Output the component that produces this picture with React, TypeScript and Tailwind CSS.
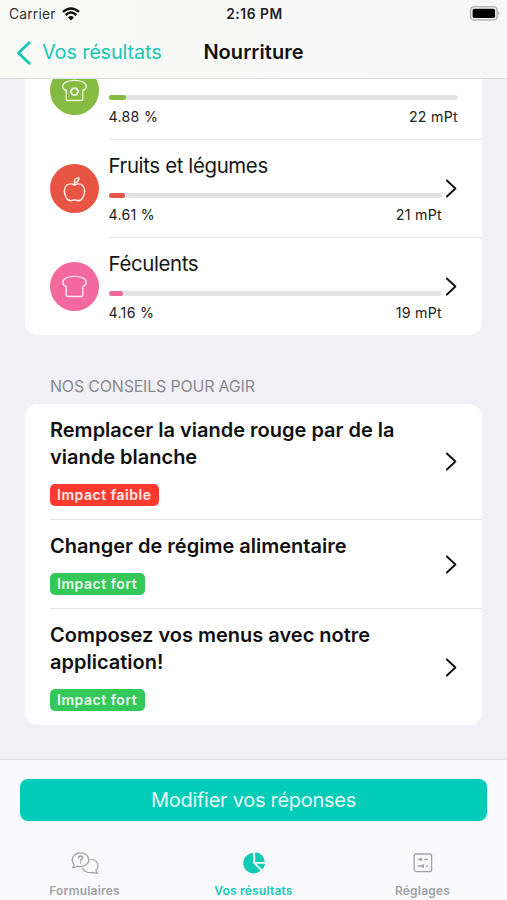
import type { ReactNode } from 'react'

type FoodItem = {
  name: string
  percent: string
  points: string
  barClass: string
  circleClass: string
  width: number
  icon: ReactNode
}

type Advice = { title: string; impact: string; badgeClass: string; rowClass: string }

// ─── Icons ────────────────────────────────────────────────────────────────────

function BreadIcon({ filled = false }: { filled?: boolean }) {
  return (
    <svg width="26" height="23" viewBox="0 0 26 23" fill="none" stroke="white" strokeOpacity="0.85" strokeWidth="1.4" strokeLinejoin="round">
      <path d="M12.5 1.4 C6.1 1.4 .8 3.6 .8 7.2 C.8 9.4 2 10.9 4.2 11.1 V20 Q4.2 21.5 5.7 21.5 H19.3 Q20.8 21.5 20.8 20 V11.1 C23 10.9 24.2 9.4 24.2 7.2 C24.2 3.6 18.9 1.4 12.5 1.4 Z" />
      {filled && <path d="M10.7 9.3 H14.3 L16.4 12.5 L14.3 15.9 H10.7 L8.6 12.5 Z" strokeWidth="1.7" />}
    </svg>
  )
}

function AppleIcon() {
  return (
    <svg width="23" height="26" viewBox="0 0 24 27" fill="none" stroke="white" strokeOpacity="0.9" strokeWidth="1.5" strokeLinejoin="round">
      <path d="M12 9.4 C9.5 8 6 7.9 3.8 9.6 C.6 12.4 1 18 3 21.8 C4.8 25.5 7.4 26.4 10 25.2 Q12 24.5 14 25.2 C16.6 26.4 19.2 25.5 21 21.8 C23 18 23.4 12.4 20.2 9.6 C18 7.9 14.5 8 12 9.4 Z" />
      <path d="M12 9.2 V6.9 C11 4 13.2 1.8 16.5 1.9 C17 4.9 15 6.9 12 6.9" />
    </svg>
  )
}

function Chevron() {
  return (
    <svg className="shrink-0" width="12" height="19" viewBox="0 0 12 19" fill="none" stroke="#111" strokeWidth="1.9" strokeLinecap="round" strokeLinejoin="round">
      <path d="M1.9 1.5 L10.4 9.5 L1.9 17.5" />
    </svg>
  )
}

function ChatIcon() {
  return (
    <svg width="28" height="22" viewBox="0 0 28 22" fill="none" stroke="currentColor" strokeWidth="1.3" strokeLinejoin="round" strokeLinecap="round">
      <path d="M9.5 .9 C4.8 .9 1.2 4 1.2 7.8 C1.2 9.8 2.1 11.6 3.2 12.6 C3.2 14 2.5 14.9 1.7 15.5 C3.4 15.6 5.2 15 6.3 14.2 C12.5 15.7 17.8 12.4 17.8 7.8 C17.8 4 14.4 .9 9.5 .9 Z" />
      <path d="M19.7 7.4 C24.2 7.7 27 10.4 27 13.8 C27 15.6 26.2 17.2 25 18.2 C25.1 19.6 25.7 20.6 26.5 21.2 C24.7 21.2 23.3 20.8 22.1 20.3 C17.4 21.6 12.7 19.6 11.7 16.2" />
      <path d="M7.5 5.9 C7.5 3.4 11.6 3.5 11.6 5.8 C11.6 7.2 9.6 7.2 9.6 8.7 M9.6 10.8 V11" strokeWidth="1.5" />
    </svg>
  )
}

function PieIcon() {
  return (
    <svg width="24" height="22" viewBox="0 0 24 22" fill="currentColor">
      <path d="M11.3 1 V11.2 L18.6 18.5 A10.2 10.2 0 1 1 11.3 1 Z" />
      <path d="M13.1 .2 A10 10 0 0 1 22.8 10 H13.1 Z" />
      <path d="M14.2 11.8 H23.2 A9.5 9.5 0 0 1 20 17.6 Z" />
    </svg>
  )
}

function SettingsIcon() {
  return (
    <svg width="20" height="20" viewBox="0 0 20 20" fill="none" stroke="currentColor" strokeWidth="1.3">
      <rect x="1.2" y="1" width="17.4" height="17.7" rx="2" />
      <path d="M4.8 6.4 H9.5 M11 6.4 H15 M4.8 13 H11 M13.2 13 H15" />
      <path d="M7.7 4.7 V8.1 M10.1 11.3 V14.7" strokeWidth="1.7" />
    </svg>
  )
}

// ─── Data ─────────────────────────────────────────────────────────────────────

const foods: FoodItem[] = [
  { name: 'Fruits et légumes', percent: '4.61 %', points: '21 mPt', barClass: 'bg-[#e85747]', circleClass: 'bg-[#e95544]', width: 16, icon: <AppleIcon /> },
  { name: 'Féculents', percent: '4.16 %', points: '19 mPt', barClass: 'bg-[#f2679c]', circleClass: 'bg-[#f3689d]', width: 14, icon: <BreadIcon /> },
]

const advices: Advice[] = [
  { title: 'Remplacer la viande rouge par de la viande blanche', impact: 'Impact faible', badgeClass: 'w-[109px] bg-[#ff3b30]', rowClass: 'h-[115px]' },
  { title: 'Changer de régime alimentaire', impact: 'Impact fort', badgeClass: 'w-[95px] bg-[#34c759]', rowClass: 'h-[89px]' },
  { title: 'Composez vos menus avec notre application!', impact: 'Impact fort', badgeClass: 'w-[95px] bg-[#34c759]', rowClass: 'h-[117px]' },
]

function Bar({ width, color }: { width: number; color: string }) {
  return (
    <div className="h-[5px] rounded-full bg-[#e3e3e3]">
      <div className={`h-full rounded-full ${color}`} style={{ width }} />
    </div>
  )
}

function Figures({ percent, points }: { percent: string; points: string }) {
  return (
    <div className="mt-2 flex justify-between text-[14.2px] leading-[18px] tracking-[0.28px] text-[#222]">
      <span>{percent}</span>
      <span>{points}</span>
    </div>
  )
}

function FoodRow({ item }: { item: FoodItem }) {
  return (
    <div className="flex h-[98px] pl-[25px]">
      <div className={`mt-[25px] flex size-[49px] shrink-0 items-center justify-center rounded-full ${item.circleClass}`}>
        {item.icon}
      </div>
      <div className="ml-[9.5px] flex flex-1 items-center border-t border-[#e7e7ea] pr-[25px]">
        <div className="flex h-full min-w-0 flex-1 flex-col">
          <div className="mt-[12px] h-[28px] text-[20.4px] leading-[28px] tracking-[-0.35px] text-[#151515]">{item.name}</div>
          <div className="mt-[13px]">
            <Bar width={item.width} color={item.barClass} />
          </div>
          <Figures percent={item.percent} points={item.points} />
        </div>
        <div className="ml-[3px] flex">
          <Chevron />
        </div>
      </div>
    </div>
  )
}

// ─── Screen ───────────────────────────────────────────────────────────────────

export default function App() {
  return (
    <div className="flex h-[900px] w-[507px] flex-col overflow-hidden bg-[#f1f0f5] font-['Inter','Liberation_Sans',sans-serif]">
      <header className="h-[79px] shrink-0 border-b border-[#dededf] bg-linear-to-r from-[#fafbf8] to-[#f7f7f8]">
        <div className="grid h-[27px] grid-cols-3 items-center pr-[7px] pl-[9px] text-[13.8px] text-[#303030]">
          <div className="flex items-center gap-[6px]">
            <span className="pt-px tracking-[0.2px]">Carrier</span>
            <svg width="18" height="14" viewBox="0 0 18 14" fill="none" stroke="#111" strokeWidth="2.4">
              <path d="M.9 4.9 Q9 -2 17.1 4.9 M3.7 8 Q9 3.2 14.3 8" />
              <path d="M6 10.4 Q9 7.8 12 10.4 L9 13.6 Z" fill="#111" stroke="none" />
            </svg>
          </div>
          <span className="pt-px text-center font-semibold tracking-[0.55px] text-[#222]">2:16 PM</span>
          <svg className="justify-self-end" width="31" height="15" viewBox="0 0 31 15" fill="none">
            <rect x="1.6" y=".8" width="26.5" height="13.2" rx="3.5" stroke="#b8b8b8" strokeWidth="1.6" />
            <rect x="3.6" y="2.8" width="22.5" height="9.2" rx="1.8" fill="#000" />
            <path d="M29.3 5 Q31.4 7.3 29.3 9.7 Z" fill="#aaa" />
          </svg>
        </div>
        <div className="relative flex h-[50px] items-center justify-center">
          <button className="absolute top-[12px] left-[16px] flex items-center gap-[10px] text-[20px] leading-[27px] tracking-[-0.2px] text-[#18c8b5]">
            <svg width="16" height="24" viewBox="0 0 16 24" fill="none" stroke="currentColor" strokeWidth="2.8" strokeLinecap="round" strokeLinejoin="round">
              <path d="M13.2 1.8 L2.5 12 L13.2 22.2" />
            </svg>
            Vos résultats
          </button>
          <h1 className="text-[20px] font-semibold tracking-[0.05px] text-[#111]">Nourriture</h1>
        </div>
      </header>

      <main className="h-[680px] shrink-0 overflow-hidden px-[25px]">
        <section className="rounded-b-[13px] bg-white">
          <div className="flex h-[60px] pl-[25px]">
            <div className="-mt-[13px] flex size-[49px] shrink-0 items-center justify-center rounded-full bg-[#86bb42]">
              <BreadIcon filled />
            </div>
            <div className="ml-[9.5px] flex-1 pt-[16px] pr-[24px]">
              <Bar width={17} color="bg-[#86bb42]" />
              <Figures percent="4.88 %" points="22 mPt" />
            </div>
          </div>
          {foods.map((item) => <FoodRow key={item.name} item={item} />)}
        </section>

        <h2 className="mt-[41px] h-[28px] pl-[25px] text-[16px] leading-[21px] tracking-[-0.2px] text-[#8b8b90]">NOS CONSEILS POUR AGIR</h2>
        <section className="rounded-[13px] bg-white pl-[25px]">
          {advices.map((advice, i) => (
            <div key={advice.title} className={`flex items-center pr-[25px] ${advice.rowClass} ${i > 0 ? 'border-t border-[#e7e7ea]' : ''}`}>
              <div className="h-full flex-1 pt-[13px]">
                <h3 className="max-w-[370px] text-[20px] leading-[27px] font-semibold text-[#111]">{advice.title}</h3>
                <div className={`mt-[13px] flex h-[22px] items-center rounded-[5px] pb-px pl-[7px] text-[14px] font-semibold tracking-[0.53px] whitespace-nowrap text-white/90 ${advice.badgeClass}`}>
                  {advice.impact}
                </div>
              </div>
              <Chevron />
            </div>
          ))}
        </section>
      </main>

      <footer className="flex-1 border-t border-[#e3e3e7] bg-[#fafafc]">
        <div className="px-5 pt-[19px]">
          <button className="flex h-[42px] w-full items-center justify-center rounded-[8px] bg-[#00ccb7] text-[20px] tracking-[-0.28px] text-white/90">
            Modifier vos réponses
          </button>
        </div>
        <nav className="mt-[30px] grid grid-cols-3 text-[12px] font-semibold tracking-[0.2px] text-[#a3a3a5]">
          <div className="flex flex-col items-center">
            <div className="flex h-[24px] items-center"><ChatIcon /></div>
            <span className="mt-[8px] leading-[16px]">Formulaires</span>
          </div>
          <div className="flex flex-col items-center text-[#12cbb7]">
            <div className="flex h-[24px] items-center"><PieIcon /></div>
            <span className="mt-[8px] leading-[16px]">Vos résultats</span>
          </div>
          <div className="flex flex-col items-center">
            <div className="flex h-[24px] items-center"><SettingsIcon /></div>
            <span className="mt-[8px] leading-[16px]">Réglages</span>
          </div>
        </nav>
      </footer>
    </div>
  )
}
